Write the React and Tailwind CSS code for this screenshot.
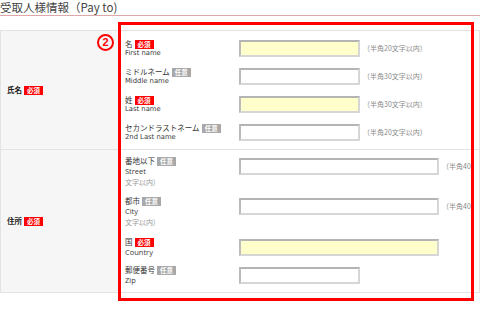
const jp = { fontFamily: '"Noto Sans CJK JP", "Noto Sans", sans-serif' };
const latin = { fontFamily: '"DejaVu Sans", "Noto Sans CJK JP", sans-serif' };
const latin2 = { fontFamily: '"Open Sans", "Noto Sans CJK JP", sans-serif' };

const Badge = ({ required }) => (
  <span
    className={`inline-flex items-center justify-center h-[9px] px-[3px] text-[6.5px] leading-none text-white font-bold ${
      required ? 'bg-[#ff0000]' : 'bg-[#a8a8a8]'
    }`}
    style={jp}
  >
    {required ? '必須' : '任意'}
  </span>
);

const Input = ({ width, yellow }) => (
  <div
    className={`h-[17px] border-2 border-[#d6d6d6] border-t-[#b4b4b4] border-l-[#bcbcbc] ${
      yellow ? 'bg-[#ffffcc]' : 'bg-white'
    } ${width}`}
  />
);

const Hint = ({ text }) => (
  <span className="ml-[3px] text-[7px] leading-[17px] text-[#8a8a8a] whitespace-nowrap" style={jp}>
    {text}
  </span>
);

const NameField = ({ label, sub, required, hint, yellow }) => (
  <div className="flex items-start">
    <div className="w-[114px] -mt-[1px]">
      <div className="flex items-center gap-[2px] h-[10px] text-[7.5px] text-[#333]" style={jp}>
        <span>{label}</span>
        <Badge required={required} />
      </div>
      <div className="h-[8px] text-[6.8px] leading-[8px] text-[#3a3a3a]" style={latin}>
        {sub}
      </div>
    </div>
    <Input width="w-[121px]" yellow={yellow} />
    <Hint text={hint} />
  </div>
);

const AddrField = ({ label, sub, required, hint, wrap, yellow, width }) => (
  <div className="flex items-start">
    <div className="w-[114px] -mt-[2px]">
      <div className="flex items-center gap-[2px] h-[10px] text-[7.5px] text-[#333]" style={jp}>
        <span>{label}</span>
        <Badge required={required} />
      </div>
      <div className="h-[10px] text-[7.5px] leading-[10px] text-[#3a3a3a]" style={latin2}>
        {sub}
      </div>
      {wrap && (
        <div className="h-[12px] text-[7px] leading-[12px] text-[#9a9a9a]" style={jp}>
          文字以内)
        </div>
      )}
    </div>
    <Input width={width} yellow={yellow} />
    {hint && <Hint text={hint} />}
  </div>
);

const App = () => {
  return (
    <div className="relative w-[480px] h-[312px] bg-white overflow-hidden">
      <div
        className="h-[16px] border-b border-[#dfa8a8] text-[11.5px] leading-[14px] text-[#444]"
        style={jp}
      >
        受取人様情報（Pay to)
      </div>

      {/* form table */}
      <div className="mt-[14px] border border-[#e3e3e3]">
        <div className="flex border-b border-[#e3e3e3]">
          <div className="w-[118px] bg-[#f6f6f6] border-r border-[#e3e3e3] flex items-center gap-[2px] pl-[6px]">
            <span className="text-[7.5px] font-bold text-[#222]" style={jp}>氏名</span>
            <Badge required />
          </div>
          <div className="flex-1 flex flex-col gap-[11px] pl-[6px] pt-[9px] pb-[8px]">
            <NameField label="名" sub="First name" required yellow hint="（半角20文字以内）" />
            <NameField label="ミドルネーム" sub="Middle name" hint="（半角30文字以内）" />
            <NameField label="姓" sub="Last name" required yellow hint="（半角30文字以内）" />
            <NameField label="セカンドラストネーム" sub="2nd Last name" hint="（半角20文字以内）" />
          </div>
        </div>

        <div className="flex">
          <div className="w-[118px] bg-[#f6f6f6] border-r border-[#e3e3e3] flex items-center gap-[2px] pl-[6px]">
            <span className="text-[7.5px] font-bold text-[#222]" style={jp}>住所</span>
            <Badge required />
          </div>
          <div className="flex-1 flex flex-col pl-[6px] pt-[8px] pb-[7px]">
            <AddrField label="番地以下" sub="Street" wrap hint="（半角40" width="w-[200px]" />
            <div className="mt-[10px]">
              <AddrField label="都市" sub="City" wrap hint="（半角40" width="w-[200px]" />
            </div>
            <div className="mt-[11px]">
              <AddrField label="国" sub="Country" required yellow width="w-[200px]" />
            </div>
            <div className="mt-[10px]">
              <AddrField label="郵便番号" sub="Zip" width="w-[121px]" />
            </div>
          </div>
        </div>
      </div>

      {/* annotation overlay */}
      <div className="absolute left-[118px] top-[22px] w-[356px] h-[279px] border-[3px] border-[#ff0000] pointer-events-none" />
      <div
        className="absolute left-[97px] top-[34px] w-[17px] h-[17px] rounded-full border-2 border-[#ff0000] flex items-center justify-center text-[11px] font-bold text-[#ff0000] leading-none"
        style={{ fontFamily: '"Liberation Sans", Arial, sans-serif' }}
      >
        2
      </div>
    </div>
  );
};

export default App;
